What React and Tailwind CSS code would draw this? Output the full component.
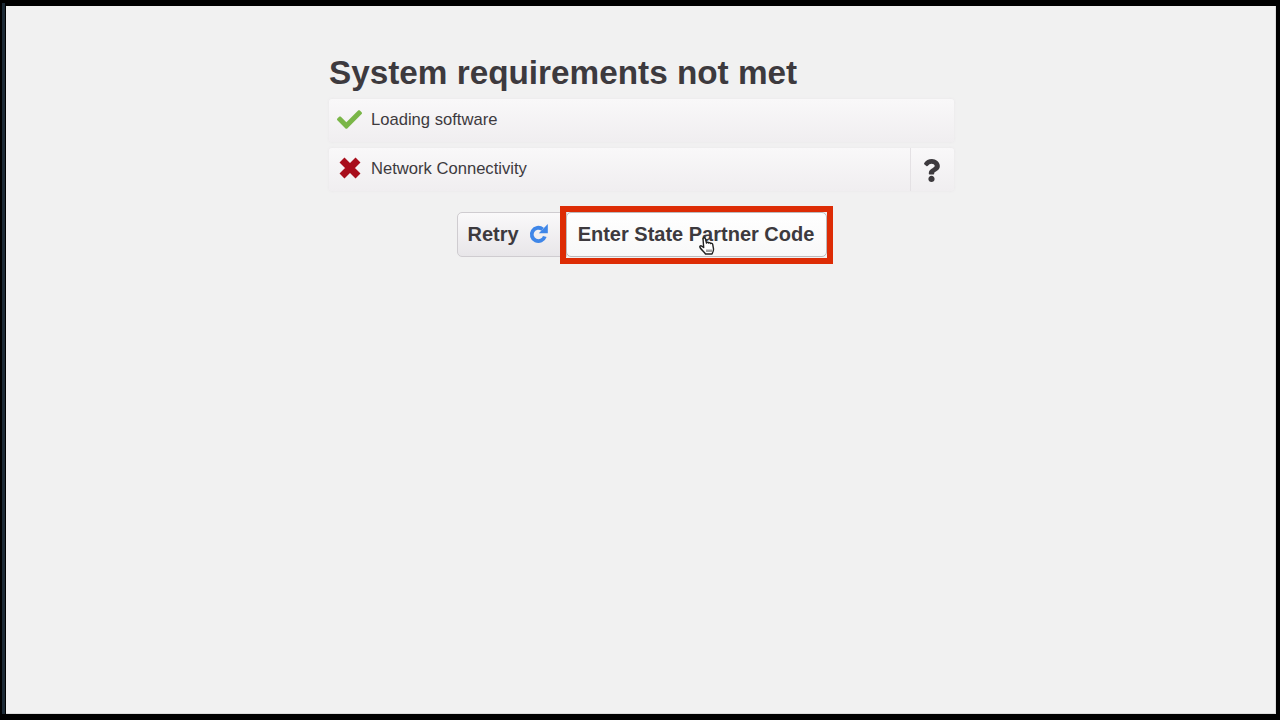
import React from "react";
import { FaCheck, FaQuestion } from "react-icons/fa";

const font = { fontFamily: '"Liberation Sans", Arial, sans-serif' };

// Requirement row: icon, label and an optional help cell
function StatusRow({ icon, label, help }) {
  return (
    <div className="flex h-[43px] rounded-[3px] bg-gradient-to-b from-[#f9f8f9] to-[#f0eef0] shadow-[0_0_3px_#e8e4e8]">
      <div className="flex flex-1 items-center">
        <div className="flex w-[42px] justify-center">{icon}</div>
        <span className="text-[16.6px] text-[#3d3a3e]">{label}</span>
      </div>
      {help && (
        <div className="flex w-[44px] items-center justify-center border-l border-[#e4e1e4] pr-[3px] pt-[2px] text-[#3d3a3e]">
          <FaQuestion size={23} />
        </div>
      )}
    </div>
  );
}

function CrossIcon() {
  return (
    <svg width="24" height="24" viewBox="0 0 24 24" className="-mt-[3px] -ml-[1px]">
      <path d="M4 4 L20 20 M20 4 L4 20" fill="none" stroke="#a80e1c" strokeWidth="7" />
    </svg>
  );
}

function RetryIcon() {
  return (
    <svg width="20" height="21" viewBox="0 0 20 21">
      <path d="M15.800 13.500 A6.700 6.700 0 1 1 13.600 6.200" fill="none" stroke="#3f86e8" strokeWidth="3.800" />
      <path d="M18.800 1 V10.200 H9.800 Z" fill="#3f86e8" />
    </svg>
  );
}

function HandCursor() {
  return (
    <svg width="16" height="19" viewBox="0 0 16 19" className="absolute left-[132px] top-[24px]">
      <path
        d="M4 1.500c.6-1 2-.9 2.400.2L7.500 6c.2-1 1.900-1.100 2.200.1.400-.8 1.800-.6 2 .4.600-.5 1.800-.2 2 .8l.8 4.500c.3 2-.6 3.500-1.500 5.200H6.500C5 15 2.500 12.800 1 10.500c-.6-1 .5-2.200 1.700-1.400l2 1.400z"
        fill="#fff"
        stroke="#222"
        strokeWidth="1.400"
        strokeLinejoin="round"
      />
      <path d="M8 12.500v2.500M10 12.500v2.500M12 12.500v2.500" stroke="#444" strokeWidth="1" />
    </svg>
  );
}

export default function App() {
  return (
    <div style={font} className="flex h-[720px] w-[1280px] border-l-2 border-black bg-black pb-[6px] pr-[4px] pt-[6px]">
      <div className="-mt-[3px] mr-[1px] w-[3px] bg-[#1c2a36]"></div>
      <div className="flex flex-1 flex-col items-center border-b border-r border-[#dcdcdc] bg-[#f1f1f1] pl-[2px]">
        <div className="w-[625px] pt-[46px]">
          <h1 className="h-[47px] text-[33.3px] font-bold leading-[41px] text-[#3d3a3e]">System requirements not met</h1>
          <div className="flex flex-col gap-[6px]">
            <StatusRow icon={<FaCheck size={25} color="#7ab648" className="-mt-[2px] -ml-[1px]" />} label="Loading software" />
            <StatusRow icon={<CrossIcon />} label="Network Connectivity" help />
          </div>
          <div className="mt-[21px] flex justify-center">
            <button className="flex h-[45px] w-[110px] items-center gap-[10px] rounded-l-[5px] border border-[#cfccd0] bg-gradient-to-b from-[#faf9fa] to-[#e8e6e9] pb-[2px] pl-[10px] text-[20px] font-bold text-[#3d3a3e]">
              Retry
              <RetryIcon />
            </button>
            <button className="relative -ml-px h-[45px] w-[261px] rounded-[5px] border border-[#bdbabd] bg-gradient-to-b from-white to-[#f8f8f8] pb-[2px] text-[20px] font-bold text-[#3d3a3e]">
              Enter State Partner Code
              <span className="absolute -inset-x-[7px] -bottom-[8px] -top-[7px] border-[6px] border-[#dd2c05]"></span>
              <HandCursor />
            </button>
          </div>
        </div>
      </div>
    </div>
  );
}
